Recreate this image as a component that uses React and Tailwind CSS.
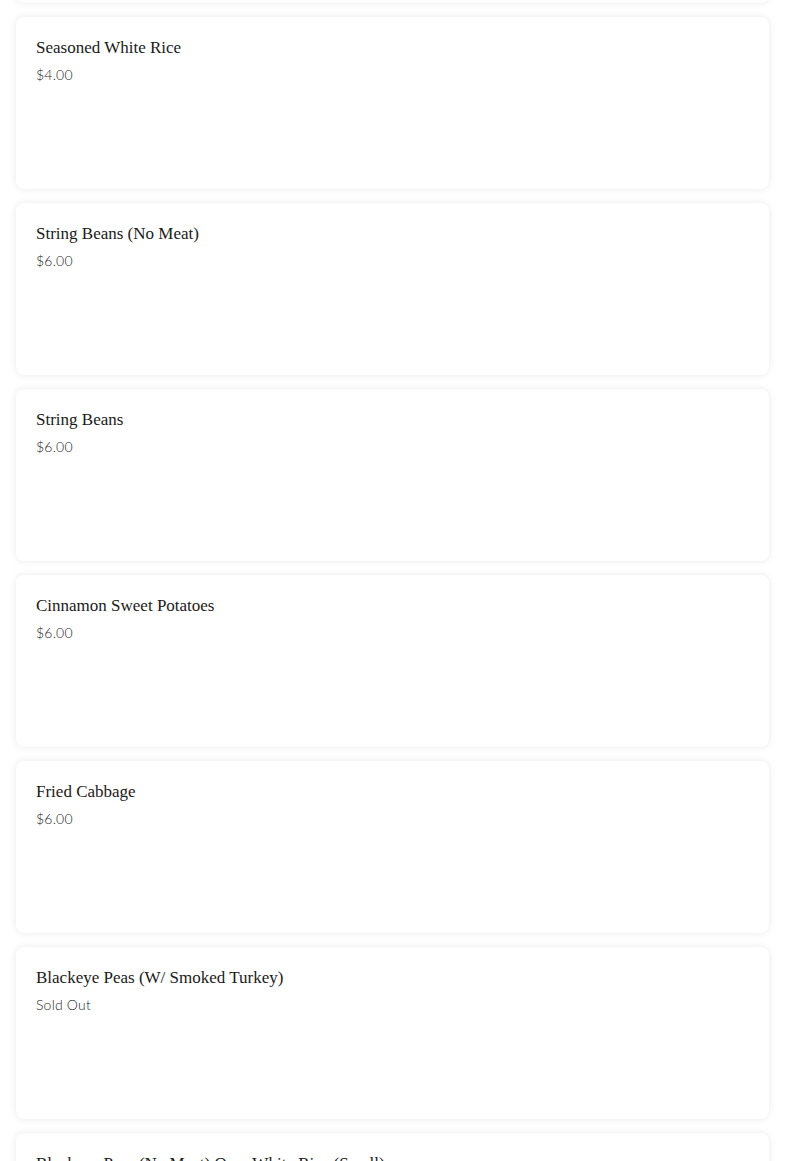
import React from "react";

const items = [
  { name: "Seasoned White Rice", price: "$4.00" },
  { name: "String Beans (No Meat)", price: "$6.00" },
  { name: "String Beans", price: "$6.00" },
  { name: "Cinnamon Sweet Potatoes", price: "$6.00" },
  { name: "Fried Cabbage", price: "$6.00" },
  { name: "Blackeye Peas (W/ Smoked Turkey)", price: "Sold Out" },
  { name: "Blackeye Peas (No Meat) Over White Rice (Small)", price: "$6.00" },
];

const MenuCard = ({ item }) => (
  <div className="h-[172px] shrink-0 rounded-lg bg-white px-5 pt-[21px] shadow-[0_0_7px_rgba(0,0,0,0.09)]">
    {item && (
      <>
        <h3 className="text-[17px] leading-[20px] text-[#1a1a1a] font-['Liberation_Serif',serif]">{item.name}</h3>
        <p className="mt-[8px] text-[14px] leading-[18px] font-light tracking-[0.2px] text-[#262626] font-['Lato',sans-serif]">
          {item.price}
        </p>
      </>
    )}
  </div>
);

export default function App() {
  return (
    <div className="h-[1161px] overflow-hidden bg-white">
      <div className="-mt-[169px] flex flex-col gap-[14px] px-4">
        {/* card above, scrolled out of view */}
        <MenuCard item={null} />
        {items.map((item) => (
          <MenuCard key={item.name} item={item} />
        ))}
      </div>
    </div>
  );
}
